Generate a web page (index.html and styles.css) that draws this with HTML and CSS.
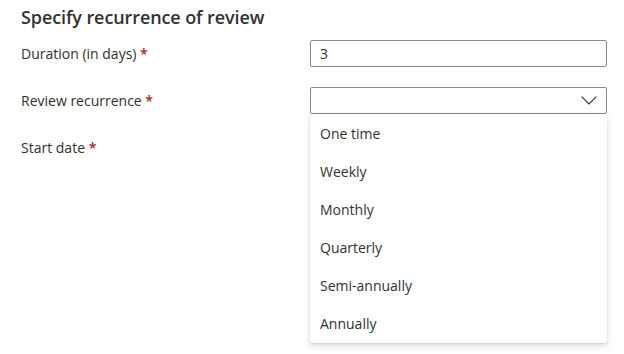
FILE: index.html
```html
<!DOCTYPE html>
<html>
<head>
<meta charset="utf-8">
<link rel="stylesheet" href="styles.css">
</head>
<body>
<div class="page">
  <h2 class="title">Specify recurrence of review</h2>
  <div class="form">
    <div class="row">
      <label class="label">Duration (in days) <span class="req">*</span></label>
      <div class="field"><div class="input">3</div></div>
    </div>
    <div class="row">
      <label class="label">Review recurrence <span class="req">*</span></label>
      <div class="field">
        <div class="input select">
          <svg class="chev" width="16" height="9" viewBox="0 0 16 9"><polyline points="0.7,0.7 8,8 15.3,0.7" fill="none" stroke="#323130" stroke-width="1.2"/></svg>
        </div>
        <ul class="menu">
          <li>One time</li>
          <li>Weekly</li>
          <li>Monthly</li>
          <li>Quarterly</li>
          <li>Semi-annually</li>
          <li>Annually</li>
        </ul>
      </div>
    </div>
    <div class="row">
      <label class="label">Start date <span class="req">*</span></label>
      <div class="field"></div>
    </div>
  </div>
</div>
</body>
</html>
```
FILE: styles.css
```css
html, body {
  margin: 0;
  padding: 0;
  background: #ffffff;
}
body {
  font-family: "Open Sans", "Noto Sans", sans-serif;
  color: #323130;
  width: 624px;
  height: 354px;
  overflow: hidden;
}
.page {
  padding: 5px 0 0 21px;
}
.title {
  margin: 0;
  font-size: 18px;
  line-height: 24px;
  font-weight: 600;
  letter-spacing: -0.1px;
}
.form {
  margin-top: 11px;
  display: flex;
  flex-direction: column;
  gap: 20px;
}
.row {
  display: grid;
  grid-template-columns: 289px 297px;
  align-items: center;
  height: 27px;
}
.label {
  font-size: 14px;
  line-height: 19px;
}
.req {
  color: #a4262c;
  font-weight: 600;
}
.field {
  position: relative;
  height: 27px;
}
.input {
  box-sizing: border-box;
  height: 27px;
  border: 1px solid #8a8886;
  border-radius: 2px;
  padding: 0 9px;
  font-size: 14px;
  line-height: 25px;
  display: flex;
  align-items: center;
}
.select {
  justify-content: flex-end;
  padding-right: 9px;
}
.chev {
  display: block;
}
.menu {
  position: absolute;
  top: 100%;
  left: 0;
  width: 297px;
  margin: 0;
  padding: 1px 0 0;
  list-style: none;
  background: #fff;
  border-radius: 2px;
  box-shadow: 0 3px 7px rgba(0,0,0,0.13), 0 0.6px 2px rgba(0,0,0,0.1);
}
.menu li {
  height: 38px;
  line-height: 38px;
  padding-left: 10px;
  font-size: 14px;
}
```
